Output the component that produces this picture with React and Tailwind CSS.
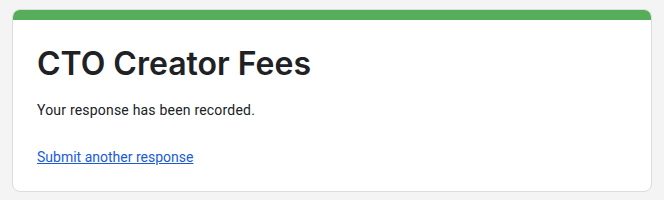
import React from "react";

const App = () => {
  return (
    <div className="min-h-[200px] bg-[#f4f4f4] px-3 pt-[9px] pb-2" style={{ fontFamily: "Roboto, Arial, sans-serif" }}>
      <div className="rounded-lg border border-[#dadce0] bg-white overflow-hidden">
        <div className="h-[10px] bg-[#56ad5a]" />
        <div className="px-6 pt-6 pb-6">
          <h1 className="font-['Inter',sans-serif] text-[32px] leading-10 font-semibold text-[#202124]">CTO Creator Fees</h1>
          <p className="mt-4 text-sm leading-5 tracking-[0.2px] text-[#202124]">Your response has been recorded.</p>
          <a href="#" className="mt-[27px] block text-sm leading-5 text-[#1a5bd8] underline w-fit">
            Submit another response
          </a>
        </div>
      </div>
    </div>
  );
};

export default App;
